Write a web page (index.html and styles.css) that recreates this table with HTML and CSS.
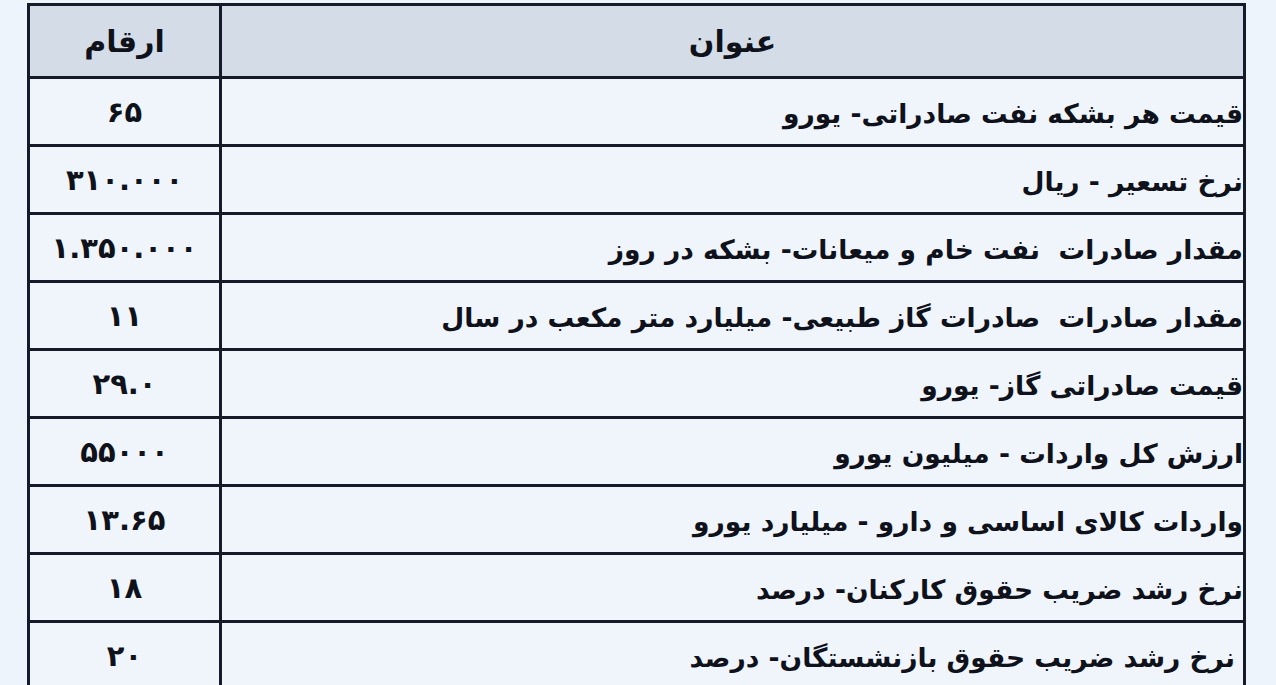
FILE: index.html
```html
<!DOCTYPE html>
<html lang="fa" dir="rtl">
<head>
<meta charset="utf-8">
<title>جدول</title>
<link rel="stylesheet" href="styles.css">
</head>
<body>
<div class="page">
<table class="data">
  <thead>
    <tr class="head-row">
      <th class="col-title">عنوان</th>
      <th class="col-num">ارقام</th>
    </tr>
  </thead>
  <tbody>
    <tr><td class="col-title">قیمت هر بشکه نفت صادراتی- یورو</td><td class="col-num">۶۵</td></tr>
    <tr><td class="col-title">نرخ تسعیر - ریال</td><td class="col-num">۳۱۰.۰۰۰</td></tr>
    <tr><td class="col-title">مقدار صادرات &nbsp;نفت خام و میعانات- بشکه در روز</td><td class="col-num">۱.۳۵۰.۰۰۰</td></tr>
    <tr><td class="col-title">مقدار صادرات &nbsp;صادرات گاز طبیعی- میلیارد متر مکعب در سال</td><td class="col-num">۱۱</td></tr>
    <tr><td class="col-title">قیمت صادراتی گاز- یورو</td><td class="col-num">۲۹.۰</td></tr>
    <tr><td class="col-title">ارزش کل واردات - میلیون یورو</td><td class="col-num">۵۵۰۰۰</td></tr>
    <tr><td class="col-title">واردات کالای اساسی و دارو - میلیارد یورو</td><td class="col-num">۱۳.۶۵</td></tr>
    <tr><td class="col-title">نرخ رشد ضریب حقوق کارکنان- درصد</td><td class="col-num">۱۸</td></tr>
    <tr><td class="col-title indent">نرخ رشد ضریب حقوق بازنشستگان- درصد</td><td class="col-num">۲۰</td></tr>
  </tbody>
</table>
</div>
</body>
</html>
```

FILE: styles.css
```css
html, body {
  margin: 0;
  padding: 0;
  background: #eef4fb;
  height: 100%;
  overflow: hidden;
}

.page {
  direction: ltr;
  padding: 3px 0 0 27px;
}

.data {
  direction: rtl;
  border-collapse: collapse;
  width: 1219px;
  table-layout: fixed;
  font-family: "DejaVu Sans", sans-serif;
  color: #0f121b;
  background: #f0f5fc;
}

.data th,
.data td {
  border: 3px solid #161b2a;
  padding: 0;
  vertical-align: middle;
}

.head-row {
  height: 73px;
  background: #d4dce8;
}

.data th {
  font-weight: bold;
  font-size: 30px;
  text-align: center;
}

.data tbody tr {
  height: 68px;
}

.col-num {
  width: 189px;
  text-align: center;
  font-weight: bold;
  font-size: 29px;
}

.data td.col-title {
  text-align: right;
  font-weight: bold;
  font-size: 26.5px;
  padding-top: 4px;
  padding-right: 0;
}

.data td.indent {
  padding-right: 8px;
}
```
